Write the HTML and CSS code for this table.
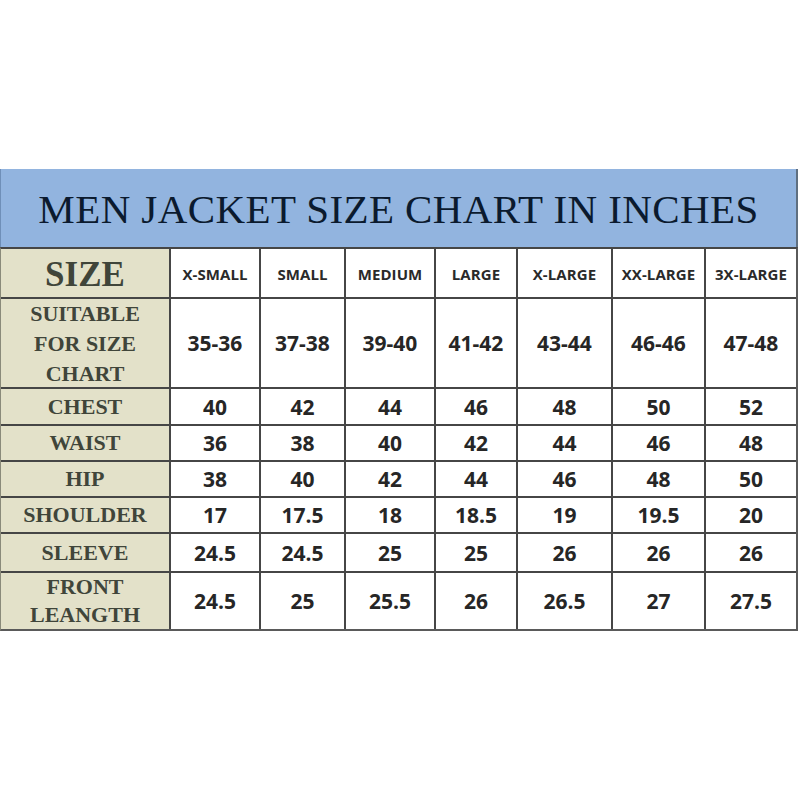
FILE: index.html
```html
<!DOCTYPE html>
<html>
<head>
<meta charset="utf-8">
<link rel="stylesheet" href="styles.css">
</head>
<body>
<div class="chart">
  <div class="title">MEN JACKET SIZE CHART IN INCHES</div>
  <div class="grid">
    <div class="label size">SIZE</div>
    <div class="head">X-SMALL</div>
    <div class="head">SMALL</div>
    <div class="head">MEDIUM</div>
    <div class="head">LARGE</div>
    <div class="head">X-LARGE</div>
    <div class="head">XX-LARGE</div>
    <div class="head">3X-LARGE</div>

    <div class="label multi">SUITABLE<br>FOR SIZE<br>CHART</div>
    <div class="val">35-36</div><div class="val">37-38</div><div class="val">39-40</div><div class="val">41-42</div><div class="val">43-44</div><div class="val">46-46</div><div class="val">47-48</div>

    <div class="label">CHEST</div>
    <div class="val">40</div><div class="val">42</div><div class="val">44</div><div class="val">46</div><div class="val">48</div><div class="val">50</div><div class="val">52</div>

    <div class="label">WAIST</div>
    <div class="val">36</div><div class="val">38</div><div class="val">40</div><div class="val">42</div><div class="val">44</div><div class="val">46</div><div class="val">48</div>

    <div class="label">HIP</div>
    <div class="val">38</div><div class="val">40</div><div class="val">42</div><div class="val">44</div><div class="val">46</div><div class="val">48</div><div class="val">50</div>

    <div class="label">SHOULDER</div>
    <div class="val">17</div><div class="val">17.5</div><div class="val">18</div><div class="val">18.5</div><div class="val">19</div><div class="val">19.5</div><div class="val">20</div>

    <div class="label">SLEEVE</div>
    <div class="val">24.5</div><div class="val">24.5</div><div class="val">25</div><div class="val">25</div><div class="val">26</div><div class="val">26</div><div class="val">26</div>

    <div class="label multi2">FRONT<br>LEANGTH</div>
    <div class="val">24.5</div><div class="val">25</div><div class="val">25.5</div><div class="val">26</div><div class="val">26.5</div><div class="val">27</div><div class="val">27.5</div>
  </div>
</div>
</body>
</html>
```

FILE: styles.css
```css
html, body {
  margin: 0;
  padding: 0;
  background: #ffffff;
}

.chart {
  padding-top: 169px;
  width: 798px;
}

.title {
  height: 78px;
  background: #92b4df;
  border-left: 1px solid #6f8fb8;
  border-right: 2px solid #5f6f80;
  box-sizing: border-box;
  display: flex;
  align-items: center;
  justify-content: center;
  font-family: "Liberation Serif", serif;
  font-size: 41px;
  letter-spacing: 0.4px;
  color: #0b1a2e;
  padding-top: 2px;
}

.grid {
  display: grid;
  grid-template-columns: 168px 88px 83px 88px 80px 93px 91px 90px;
  grid-template-rows: 48px 88px 35px 34px 34px 34px 37px 56px;
  gap: 2px;
  background: #464646;
  border-top: 2px solid #464646;
  border-bottom: 2px solid #5a5a5a;
  border-left: 1px solid #8a8a7a;
  border-right: 2px solid #5a5a5a;
  width: 798px;
  box-sizing: border-box;
}

.label {
  background: #e3e1c9;
  display: flex;
  align-items: center;
  justify-content: center;
  text-align: center;
  font-family: "Liberation Serif", serif;
  font-weight: bold;
  font-size: 22px;
  color: #40453a;
  line-height: 1;
}

.label.size {
  font-size: 35px;
  padding-top: 2px;
}

.label.multi {
  line-height: 30px;
  padding-top: 2px;
}

.label.multi2 {
  line-height: 28px;
}

.head {
  background: #ffffff;
  display: flex;
  align-items: center;
  justify-content: center;
  font-family: "Open Sans", sans-serif;
  font-weight: bold;
  font-size: 15px;
  letter-spacing: 0.1px;
  color: #2a2a2a;
  padding-top: 2px;
}

.val {
  background: #ffffff;
  display: flex;
  align-items: center;
  justify-content: center;
  font-family: "Open Sans", sans-serif;
  font-weight: bold;
  font-size: 21px;
  color: #262626;
}
```
